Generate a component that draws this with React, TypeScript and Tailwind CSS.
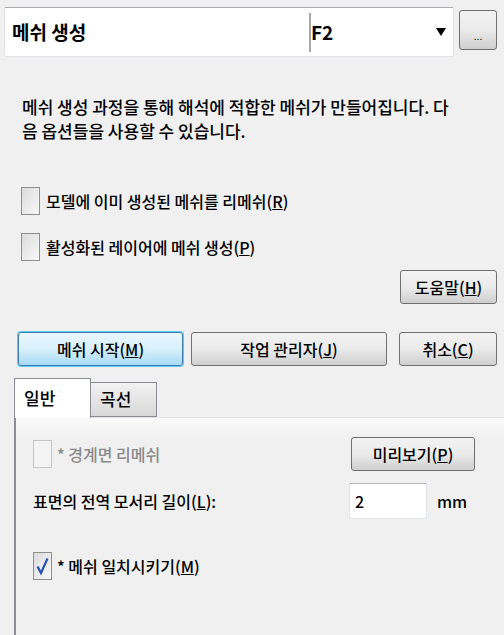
import React from "react";

const FONT = { fontFamily: '"Noto Sans CJK KR", "Noto Sans", sans-serif' };

// Windows 7 style push button
const Btn = ({
    children,
    className = "",
    primary = false,
}: {
    children: React.ReactNode;
    className?: string;
    primary?: boolean;
}) => (
    <div
        className={`flex items-center justify-center rounded-[3px] border text-[16px] leading-none text-black ${
            primary
                ? "border-[#3c7fb1] bg-gradient-to-b from-[#eaf6fd] via-[#d9f0fc] to-[#a7d9f5] shadow-[0_0_0_1px_#62c6f0]"
                : "border-[#707070] bg-gradient-to-b from-[#f2f2f2] via-[#ebebeb] to-[#cfcfcf]"
        } ${className}`}
    >
        {children}
    </div>
);

const CheckBox = ({
    checked = false,
    disabled = false,
}: {
    checked?: boolean;
    disabled?: boolean;
}) => (
    <div
        className={`flex h-[28px] w-[19px] shrink-0 items-center justify-center border ${
            disabled
                ? "border-[#c5c5c5] bg-[#f4f4f4]"
                : "border-[#8e8f8f] bg-gradient-to-br from-[#dcdcdc] to-[#f8f8f8]"
        }`}
    >
        {checked && (
            <svg width="13" height="20" viewBox="0 0 13 20">
                <path
                    d="M1.5 10.5 L5 17 L11.5 2.5"
                    fill="none"
                    stroke="#2a4fb5"
                    strokeWidth="2.2"
                />
            </svg>
        )}
    </div>
);

const App = () => {
    return (
        <div
            style={FONT}
            className="flex h-[635px] w-[504px] flex-col overflow-hidden bg-[#f0f0f0] text-black"
        >
            {/* TOP COMBO */}
            <div className="flex items-start pl-[4px] pt-[7px]">
                <div className="flex h-[50px] w-[450px] items-center rounded-[2px] border border-[#dfe3e8] border-t-[#a9abb0] bg-white">
                    <div className="w-[304px] pl-[7px] text-[19px] font-bold">메쉬 생성</div>
                    <div className="h-[39px] w-[2px] bg-[#a8a8a8]" />
                    <div className="flex flex-1 items-center justify-between pr-[7px]">
                        <span className="text-[19px] font-bold">F2</span>
                        <svg width="10" height="8" viewBox="0 0 10 8">
                            <path d="M0 0 H10 L5 8 Z" fill="#000" />
                        </svg>
                    </div>
                </div>
                <Btn className="ml-[5px] mt-[3px] h-[40px] w-[38px] items-end pb-[8px] !text-[10px] text-[#555]">
                    ...
                </Btn>
            </div>

            {/* DESCRIPTION */}
            <p className="mt-[38px] pl-[22px] text-[17px] font-medium leading-[24px]">
                메쉬 생성 과정을 통해 해석에 적합한 메쉬가 만들어집니다. 다
                <br />음 옵션들을 사용할 수 있습니다.
            </p>

            {/* OPTIONS */}
            <div className="mt-[44px] flex items-center gap-[6px] pl-[21px] text-[16px] font-medium">
                <CheckBox />
                <span>
                    모델에 이미 생성된 메쉬를 리메쉬(<u>R</u>)
                </span>
            </div>
            <div className="mt-[18px] flex items-center gap-[6px] pl-[21px] text-[16px] font-medium">
                <CheckBox />
                <span>
                    활성화된 레이어에 메쉬 생성(<u>P</u>)
                </span>
            </div>
            <div className="mt-[9px] flex justify-end pr-[7px]">
                <Btn className="h-[34px] w-[97px] font-medium">
                    도움말(<u>H</u>)
                </Btn>
            </div>

            {/* ACTION BUTTONS */}
            <div className="mt-[28px] flex items-center pl-[18px] font-medium">
                <Btn primary className="h-[34px] w-[165px]">
                    메쉬 시작(<u>M</u>)
                </Btn>
                <Btn className="ml-[8px] h-[34px] w-[196px]">
                    작업 관리자(<u>J</u>)
                </Btn>
                <Btn className="ml-[12px] h-[34px] w-[98px]">
                    취소(<u>C</u>)
                </Btn>
            </div>

            {/* TABS */}
            <div className="mt-[12px] flex items-end pl-[14px] text-[17px] font-medium">
                <div className="z-10 -mb-px flex h-[40px] w-[77px] items-start border border-b-0 border-[#898c95] bg-white pl-[9px] pt-[6px]">
                    일반
                </div>
                <div className="flex h-[35px] w-[66px] items-start border border-l-0 border-[#898c95] bg-gradient-to-b from-[#f2f2f2] to-[#d8d8d8] pl-[9px] pt-[3px]">
                    곡선
                </div>
            </div>
            <div className="ml-[14px] flex flex-1 flex-col border-l-2 border-t border-[#898c95] border-t-[#e4e4e4] bg-gradient-to-b from-[#fafafa] to-[#f0f0f0] to-[20px] pl-[17px] pt-[19px] text-[16px] font-medium">
                <div className="flex items-center">
                    <div className="flex w-[318px] items-center gap-[5px] text-[#8a8a8a]">
                        <CheckBox disabled />
                        <span>* 경계면 리메쉬</span>
                    </div>
                    <Btn className="h-[34px] w-[124px]">
                        미리보기(<u>P</u>)
                    </Btn>
                </div>
                <div className="mt-[12px] flex items-center">
                    <span className="w-[316px]">
                        표면의 전역 모서리 길이(<u>L</u>):
                    </span>
                    <div className="flex h-[36px] w-[78px] items-center border border-[#e2e6ea] border-t-[#b5b8bd] bg-white pl-[5px]">
                        2
                    </div>
                    <span className="ml-[10px]">mm</span>
                </div>
                <div className="mt-[33px] flex items-center gap-[5px]">
                    <CheckBox checked />
                    <span>* 메쉬 일치시키기(<u>M</u>)</span>
                </div>
            </div>
        </div>
    );
};

export default App;
